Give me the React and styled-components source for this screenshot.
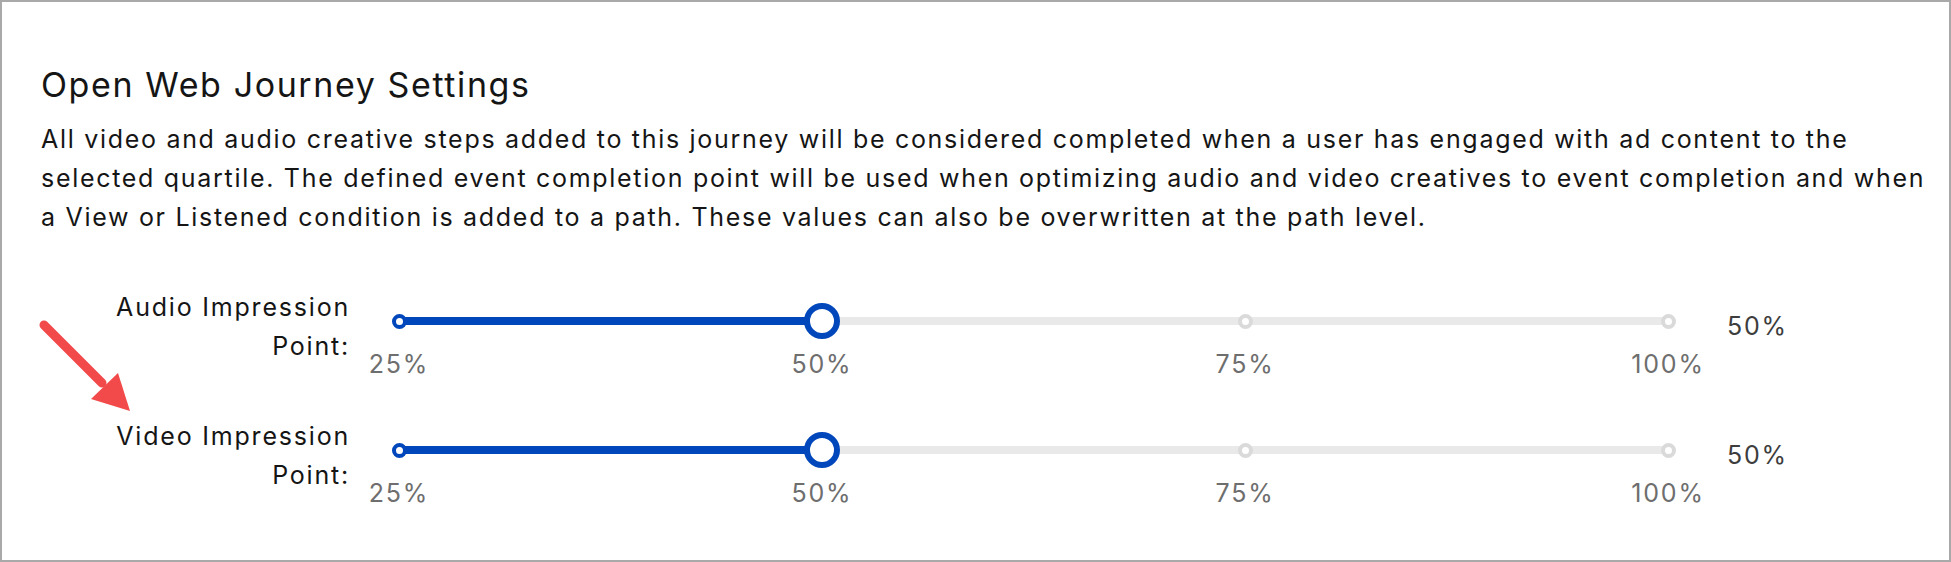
import styled, { createGlobalStyle } from 'styled-components';

const BLUE = '#0047bb';

const GlobalStyle = createGlobalStyle`
  html, body {
    margin: 0;
    padding: 0;
    background: #fff;
  }
  body {
    font-family: Inter, "Noto Sans", sans-serif;
    color: #151515;
  }
`;

/* ── Styled Components ── */
const Panel = styled.section`
  position: relative;
  box-sizing: border-box;
  width: 1951px;
  height: 562px;
  border: 2px solid #a9a9a9;
  padding: 62px 4px 0 39px;
  overflow: hidden;
  letter-spacing: 1.8px;
`;

const Title = styled.h2`
  margin: 0;
  font-size: 34px;
  font-weight: 400;
  line-height: 41px;
  letter-spacing: 1.6px;
`;

const Intro = styled.p`
  margin: 15px 0 0;
  font-size: 25px;
  line-height: 39px;
  font-weight: 400;
  letter-spacing: 1.7px;
`;

const Rows = styled.div`
  display: flex;
  flex-direction: column;
  gap: 38px;
  margin-top: 51px;
`;

const Row = styled.div`
  display: flex;
  align-items: flex-start;
`;

const Label = styled.div`
  box-sizing: border-box;
  width: 309px;
  padding-left: 50px;
  text-align: right;
  font-size: 25px;
  line-height: 39px;
`;

const Slider = styled.div`
  box-sizing: border-box;
  width: 1307px;
  margin-left: 30px;
  padding: 29px 19px 0;
  display: flex;
  flex-direction: column;
  gap: 24px;
`;

const Track = styled.div`
  height: 8px;
  border-radius: 4px;
  display: flex;
  justify-content: space-between;
  align-items: center;
  background: linear-gradient(
    to right,
    ${BLUE} 0,
    ${BLUE} ${({ $fill }) => $fill}%,
    #e9e9e9 ${({ $fill }) => $fill}%,
    #e9e9e9 100%
  );
`;

const Stop = styled.div`
  width: 0;
  display: flex;
  justify-content: center;
  align-items: center;
`;

const Dot = styled.span`
  flex: none;
  box-sizing: border-box;
  width: 15px;
  height: 15px;
  border-radius: 50%;
  background: #fff;
  border: 4px solid ${({ $on }) => ($on ? BLUE : '#dadada')};
`;

const Thumb = styled.span`
  flex: none;
  box-sizing: border-box;
  width: 36px;
  height: 36px;
  border-radius: 50%;
  background: #fff;
  border: 6px solid ${BLUE};
`;

const Ticks = styled.div`
  display: flex;
  justify-content: space-between;
`;

const Tick = styled.div`
  width: 0;
  display: flex;
  justify-content: center;
  white-space: nowrap;
  font-size: 25px;
  line-height: 30px;
  color: #6e6e6e;
`;

const Value = styled.div`
  margin-left: 40px;
  padding-top: 19px;
  font-size: 25px;
  line-height: 39px;
  color: #3d3d3d;
`;

const Arrow = styled.svg`
  position: absolute;
  left: 0;
  top: 0;
  pointer-events: none;
`;

const STOPS = [25, 50, 75, 100];

const settings = [
  { id: 'audio', label: 'Audio Impression Point:', value: 50 },
  { id: 'video', label: 'Video Impression Point:', value: 50 },
];

function QuartileSlider({ value }) {
  const idx = STOPS.indexOf(value);
  const fill = (idx / (STOPS.length - 1)) * 100;
  return (
    <Slider>
      <Track $fill={fill}>
        {STOPS.map((s, i) => (
          <Stop key={s}>
            {s === value ? <Thumb /> : <Dot $on={i <= idx} />}
          </Stop>
        ))}
      </Track>
      <Ticks>
        {STOPS.map((s) => (
          <Tick key={s}>{s}%</Tick>
        ))}
      </Ticks>
    </Slider>
  );
}

export default function App() {
  return (
    <>
      <GlobalStyle />
      <Panel>
        <Title>Open Web Journey Settings</Title>
        <Intro>
          All video and audio creative steps added to this journey will be considered completed when a user has
          engaged with ad content to the selected quartile. The defined event completion point will be used when
          optimizing audio and video creatives to event completion and when a View or Listened condition is added
          to a path. These values can also be overwritten at the path level.
        </Intro>

        <Rows>
          {settings.map(({ id, label, value }) => (
            <Row key={id}>
              <Label>{label}</Label>
              <QuartileSlider value={value} />
              <Value>{value}%</Value>
            </Row>
          ))}
        </Rows>

        <Arrow width="140" height="420" viewBox="0 0 140 420">
          <line x1="42" y1="323" x2="100" y2="381" stroke="#f24a4a" strokeWidth="9" strokeLinecap="round" />
          <polygon points="128,409 89,397 116,371" fill="#f24a4a" />
        </Arrow>
      </Panel>
    </>
  );
}
